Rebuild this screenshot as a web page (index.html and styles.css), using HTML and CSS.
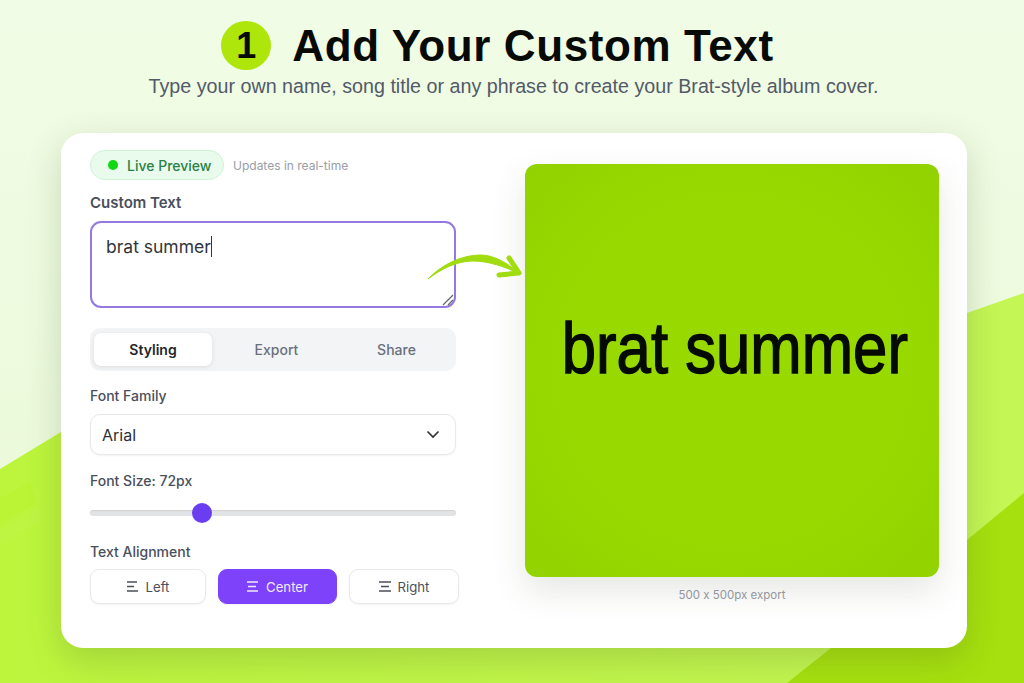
FILE: index.html
```html
<!DOCTYPE HTML>
<html>
    <head>
        <meta http-equiv="Content-Type" content="text/html; charset=UTF-8">
        <title>Add Your Custom Text</title>
        <link rel="stylesheet" href="styles.css">
    </head>
    <body>
        <!-- background shapes -->
        <svg class="backdrop" viewBox="0 0 1024 683" preserveAspectRatio="none">
            <defs>
                <linearGradient id="wash" x1="0" y1="0" x2="0" y2="1">
                    <stop offset="0" stop-color="#f1fce6"/>
                    <stop offset="1" stop-color="#e9f9d6"/>
                </linearGradient>
                <linearGradient id="lime" x1="0" y1="0" x2="1" y2="0">
                    <stop offset="0" stop-color="#bcf53c"/>
                    <stop offset="1" stop-color="#c4f655"/>
                </linearGradient>
            </defs>
            <rect width="1024" height="683" fill="url(#wash)"/>
            <polygon points="0,469 61,432 967,313 1024,293 1024,683 0,683" fill="url(#lime)"/>
            <polygon points="0,498 30,482 36,503 0,524" fill="#baf434"/>
            <polygon points="0,530 38,508 42,520 0,546" fill="#bef543"/>
            <polygon points="787,683 967,540 1024,493 1024,683" fill="#a6e00e"/>
        </svg>

        <header class="intro">
            <h1 class="title"><span class="step">1</span>Add Your Custom Text</h1>
            <p class="lead">Type your own name, song title or any phrase to create your Brat-style album cover.</p>
        </header>

        <main class="card">
            <section class="controls">
                <div class="status">
                    <span class="badge"><i class="dot"></i>Live Preview</span>
                    <span class="status-note">Updates in real-time</span>
                </div>

                <div class="label label-text">Custom Text</div>
                <div class="textbox">
                    <span class="typed">brat summer</span>
                    <svg class="grip" width="14" height="14" viewBox="0 0 14 14">
                        <path d="M2 12 L12 2 M7 12 L12 7" stroke="#666" stroke-width="1.2" fill="none"/>
                    </svg>
                </div>

                <div class="tabs">
                    <div class="tab tab-on">Styling</div>
                    <div class="tab">Export</div>
                    <div class="tab">Share</div>
                </div>

                <div class="label label-family">Font Family</div>
                <div class="select">
                    <span>Arial</span>
                    <svg width="14" height="9" viewBox="0 0 14 9">
                        <path d="M1.5 1.5 L7 7 L12.5 1.5" stroke="#333" stroke-width="1.7" fill="none"/>
                    </svg>
                </div>

                <div class="label label-size">Font Size: 72px</div>
                <div class="slider"><span class="thumb"></span></div>

                <div class="label label-align">Text Alignment</div>
                <div class="aligns">
                    <div class="align align-left">
                        <svg width="12" height="11" viewBox="0 0 12 11"><path d="M0 1 H10 M0 5.5 H7 M0 10 H11" stroke="currentColor" stroke-width="1.3"/></svg>
                        Left
                    </div>
                    <div class="align align-center">
                        <svg width="12" height="11" viewBox="0 0 12 11"><path d="M0 1 H11 M1 5.5 H9 M0 10 H11" stroke="currentColor" stroke-width="1.3"/></svg>
                        Center
                    </div>
                    <div class="align align-right">
                        <svg width="12" height="11" viewBox="0 0 12 11"><path d="M0 1 H12 M2 5.5 H10 M0 10 H12" stroke="currentColor" stroke-width="1.3"/></svg>
                        Right
                    </div>
                </div>
            </section>

            <section class="preview">
                <div class="cover"><span class="cover-text">brat summer</span></div>
                <div class="size-note">500 x 500px export</div>
            </section>

            <!-- arrow from the text box to the cover -->
            <svg class="arrow" width="100" height="36" viewBox="0 0 100 36">
                <path d="M1 26 C 18 8, 44 -1, 62 3 C 74 6, 84 13, 91 20 C 78 14, 62 8, 46 8 C 30 8, 14 16, 1 26 Z" fill="#a0dc10" stroke="#a0dc10" stroke-width="1" stroke-linejoin="round"/>
                <path d="M82 5 L92 20 L72 22" fill="none" stroke="#a0dc10" stroke-width="5" stroke-linecap="round" stroke-linejoin="round"/>
            </svg>
        </main>
    </body>
</html>
```

FILE: styles.css
```css
html, body {
    margin: 0;
    height: 683px;
    overflow: hidden;
}

body {
    position: relative;
    font-family: Inter, "Liberation Sans", sans-serif;
    color: #3d4350;
}

.backdrop {
    position: absolute;
    left: 0;
    top: 0;
    width: 1024px;
    height: 683px;
}

.intro {
    position: relative;
    height: 133px;
    text-align: center;
    font-family: "Liberation Sans", Arial, sans-serif;
}

.title {
    display: flex;
    justify-content: center;
    align-items: center;
    gap: 21px;
    margin: 0;
    padding: 21px 29px 0 0;
    height: 49px;
    font-size: 44px;
    line-height: 49px;
    letter-spacing: .6px;
    color: #070a06;
}

.step {
    width: 50px;
    height: 49px;
    border-radius: 50%;
    background: #aee50a;
    font-size: 36px;
    letter-spacing: 0;
}

.lead {
    margin: 5px 0 0;
    padding-left: 3px;
    font-size: 19.7px;
    line-height: 22px;
    color: #525a68;
}

.card {
    position: relative;
    display: flex;
    box-sizing: border-box;
    width: 906px;
    height: 515px;
    margin-left: 61px;
    padding: 17px 28px 0 29px;
    background: #fff;
    border-radius: 22px;
    box-shadow: 0 12px 34px rgba(70, 90, 40, .22);
}

.controls {
    width: 366px;
    margin-right: 69px;
}

.status {
    display: flex;
    align-items: center;
    gap: 9px;
}

.badge {
    display: flex;
    align-items: center;
    gap: 9px;
    box-sizing: border-box;
    width: 134px;
    height: 30px;
    padding-left: 17px;
    background: #e9fbec;
    border: 1px solid #cff3d6;
    border-radius: 15px;
    font-size: 14px;
    font-weight: 500;
    color: #2a8246;
}

.dot {
    width: 10px;
    height: 10px;
    border-radius: 50%;
    background: #12d812;
}

.status-note {
    font-size: 12px;
    color: #989da6;
}

.label {
    font-size: 14px;
    font-weight: 500;
    line-height: 18px;
    color: #494f5a;
}

.label-text {
    margin-top: 14px;
    font-size: 15px;
    font-weight: 600;
}

.label-family { margin-top: 16px; }
.label-size { margin-top: 17px; }
.label-align { margin-top: 27px; }

.textbox {
    position: relative;
    box-sizing: border-box;
    height: 87px;
    margin-top: 9px;
    padding: 13px 14px;
    border: 2px solid #9579e0;
    border-radius: 11px;
    font-size: 17.5px;
    line-height: 22px;
    color: #30343b;
}

.typed {
    border-right: 1.5px solid #30343b;
}

.grip {
    position: absolute;
    right: -1px;
    bottom: -1px;
}

.tabs {
    display: flex;
    box-sizing: border-box;
    height: 43px;
    margin-top: 20px;
    padding: 5px 4px;
    background: #f2f4f6;
    border-radius: 10px;
}

.tab {
    flex: 1;
    padding-left: 9px;
    text-align: center;
    font-size: 14px;
    font-weight: 500;
    line-height: 33px;
    color: #6a707b;
}

.tab-on {
    flex: none;
    width: 118px;
    padding-left: 0;
    background: #fff;
    border-radius: 7px;
    box-shadow: 0 1px 4px rgba(0, 0, 0, .1);
    font-weight: 600;
    color: #23262c;
}

.select {
    display: flex;
    justify-content: space-between;
    align-items: center;
    box-sizing: border-box;
    height: 41px;
    margin-top: 9px;
    padding: 0 15px 0 11px;
    background: #fff;
    border: 1px solid #e6e8ea;
    border-radius: 10px;
    box-shadow: 0 1px 2px rgba(0, 0, 0, .05);
    font-size: 16px;
    color: #2b2f36;
}

.slider {
    position: relative;
    height: 6px;
    margin-top: 20px;
    background: #e2e3e5;
    border-radius: 3px;
    box-shadow: inset 0 1px 1px rgba(0, 0, 0, .08);
}

.thumb {
    position: absolute;
    left: 102px;
    top: -7px;
    width: 20px;
    height: 20px;
    border-radius: 50%;
    background: #6b3df0;
}

.aligns {
    display: flex;
    gap: 12px;
    width: 369px;
    margin-top: 8px;
}

.align {
    display: flex;
    justify-content: center;
    align-items: center;
    gap: 7px;
    box-sizing: border-box;
    height: 35px;
    background: #fff;
    border: 1px solid #e8e9eb;
    border-radius: 9px;
    box-shadow: 0 1px 2px rgba(0, 0, 0, .05);
    font-size: 13.2px;
    color: #4a4f59;
}

.align-left { width: 116px; }
.align-right { width: 110px; }

.align-center {
    width: 119px;
    background: #7f42fb;
    border-color: #7f42fb;
    color: #f1eafe;
}

.preview {
    width: 414px;
    padding-top: 14px;
}

.cover {
    display: flex;
    justify-content: center;
    align-items: center;
    box-sizing: border-box;
    height: 413px;
    padding: 0 0 46px 6px;
    background: radial-gradient(ellipse at center, #98d900 60%, #91d200 100%);
    border-radius: 12px;
    box-shadow: 0 14px 34px rgba(60, 70, 40, .13);
}

.cover-text {
    font-family: "Liberation Sans", Arial, sans-serif;
    font-size: 73px;
    white-space: nowrap;
    color: #050a02;
    -webkit-text-stroke: 1.4px #050a02;
    transform: scaleX(.845);
}

.size-note {
    margin-top: 11px;
    text-align: center;
    font-size: 11.5px;
    font-feature-settings: "calt" 0;
    color: #92969e;
}

.arrow {
    position: absolute;
    left: 366px;
    top: 120px;
}
```
